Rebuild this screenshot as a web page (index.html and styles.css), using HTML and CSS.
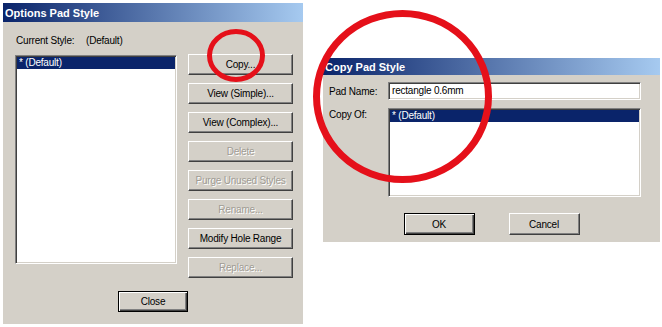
FILE: index.html
```html
<!DOCTYPE html>
<html lang="en">
<head>
	<meta charset="UTF-8">
	<title>Pad Style</title>
	<link rel="stylesheet" href="styles.css">
</head>
<body>
	<!-- Options Pad Style -->
	<div class="dialog options">
		<div class="titlebar">Options Pad Style</div>
		<div class="opt-body">
			<div class="current">
				<span class="cur-label">Current Style:</span>
				<span>(Default)</span>
			</div>
			<div class="opt-main">
				<div class="listbox opt-list">
					<div class="item sel">* (Default)</div>
				</div>
				<div class="btn-col">
					<div class="btn">Copy...</div>
					<div class="btn">View (Simple)...</div>
					<div class="btn">View (Complex)...</div>
					<div class="btn off">Delete</div>
					<div class="btn off">Purge Unused Styles</div>
					<div class="btn off">Rename...</div>
					<div class="btn">Modify Hole Range</div>
					<div class="btn off">Replace...</div>
				</div>
			</div>
			<div class="foot">
				<div class="btn def">Close</div>
			</div>
		</div>
	</div>

	<!-- Copy Pad Style -->
	<div class="dialog copy">
		<div class="titlebar">Copy Pad Style</div>
		<div class="copy-body">
			<div class="field">
				<span class="flabel">Pad Name:</span>
				<div class="input">rectangle 0.6mm</div>
			</div>
			<div class="field top">
				<span class="flabel">Copy Of:</span>
				<div class="listbox copy-list">
					<div class="item sel">* (Default)</div>
				</div>
			</div>
			<div class="copy-foot">
				<div class="btn def">OK</div>
				<div class="btn">Cancel</div>
			</div>
		</div>
	</div>

	<!-- red marks drawn over the screenshot -->
	<svg class="marks" width="662" height="327" viewBox="0 0 662 327">
		<ellipse cx="236" cy="55.5" rx="26.5" ry="24" fill="none" stroke="#e5101a" stroke-width="5"/>
		<ellipse cx="402.5" cy="96.5" rx="86" ry="83" fill="none" stroke="#e5101a" stroke-width="7"/>
	</svg>
</body>
</html>
```

FILE: styles.css
```css
body{
	margin: 0;
	width: 662px;
	height: 327px;
	background: #fff;
	display: flex;
	align-items: flex-start;
	position: relative;
	overflow: hidden;
	font-family: "Liberation Sans", Arial, sans-serif;
	font-size: 10px;
	letter-spacing: -0.2px;
	color: #000;
}
/*窗口*/
.dialog{
	background: #d4d0c8;
	box-sizing: border-box;
}
.titlebar{
	background: linear-gradient(to right, #0a246a, #a6caf0);
	color: #fff;
	font-weight: bold;
	font-size: 11px;
	letter-spacing: 0;
	padding-left: 2px;
	display: flex;
	align-items: center;
}
.options{
	width: 300px;
	height: 321px;
	margin: 3px 0 0 3px;
}
.options .titlebar{
	height: 19px;
}
.opt-body{
	padding: 12px 10px 0 12px;
}
.current{
	height: 14px;
	line-height: 14px;
	padding-left: 1px;
	display: flex;
}
.cur-label{
	width: 70px;
}
.opt-main{
	display: flex;
	justify-content: space-between;
	margin-top: 6px;
}
/*列表框*/
.listbox{
	background: #fff;
	box-sizing: border-box;
	border: 1px solid;
	border-color: #808080 #fff #fff #808080;
	box-shadow: inset 1px 1px #404040, inset -1px -1px #d4d0c8;
	padding: 1px;
}
.opt-list{
	width: 162px;
	height: 209px;
	margin-top: 1px;
}
.item{
	height: 12px;
	line-height: 12px;
	padding-left: 2px;
}
.item.sel{
	background: #0a246a;
	color: #fff;
}
.btn-col{
	width: 105px;
	display: flex;
	flex-direction: column;
	gap: 8px;
}
/*按钮*/
.btn{
	height: 21px;
	box-sizing: border-box;
	border: 1px solid;
	border-color: #fff #404040 #404040 #fff;
	box-shadow: inset -1px -1px #808080;
	background: #d4d0c8;
	display: flex;
	align-items: center;
	justify-content: center;
	white-space: nowrap;
}
.btn.off{
	color: #a09c94;
	text-shadow: 1px 1px #fff;
}
.btn.def{
	border-color: #000;
	box-shadow: inset 1px 1px #fff, inset -1px -1px #404040, inset -2px -2px #808080;
}
.foot{
	display: flex;
	justify-content: center;
	margin-top: 13px;
	padding-right: 2px;
}
.foot .btn{
	width: 70px;
}
/*复制窗口*/
.copy{
	width: 337px;
	height: 184px;
	margin: 58px 0 0 20px;
}
.copy .titlebar{
	height: 17px;
}
.copy-body{
	padding: 7px 19px 0 6px;
}
.field{
	display: flex;
	align-items: center;
}
.field.top{
	align-items: flex-start;
	margin-top: 8px;
}
.flabel{
	width: 59px;
}
.field.top .flabel{
	line-height: 12px;
	margin-top: 1px;
}
.input{
	flex: 1;
	height: 18px;
	box-sizing: border-box;
	background: #fff;
	border: 1px solid;
	border-color: #808080 #fff #fff #808080;
	box-shadow: inset 1px 1px #404040, inset -1px -1px #d4d0c8;
	padding: 0 3px;
	line-height: 16px;
}
.copy-list{
	flex: 1;
	height: 89px;
}
.copy-foot{
	display: flex;
	justify-content: center;
	gap: 34px;
	margin-top: 16px;
	padding-left: 13px;
}
.copy-foot .btn{
	width: 71px;
	height: 22px;
}
/*红圈*/
.marks{
	position: absolute;
	left: 0;
	top: 0;
}
```
